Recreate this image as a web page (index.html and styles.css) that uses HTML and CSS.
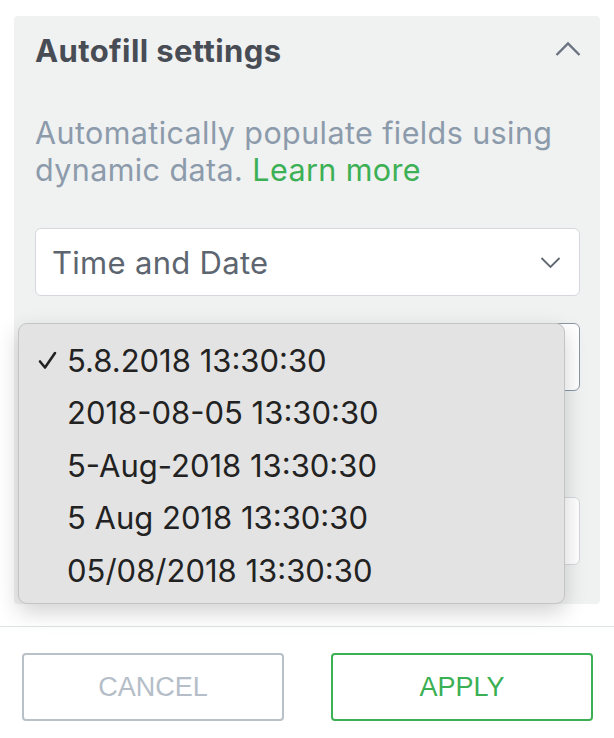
FILE: index.html
```html
<!DOCTYPE html>
<html>
<head>
<meta charset="utf-8">
<link rel="stylesheet" href="styles.css">
</head>
<body>
<div class="page">
  <div class="panel">
    <div class="panel-head">
      <h2 class="title">Autofill settings</h2>
      <svg class="chev-up" width="26" height="16" viewBox="0 0 26 16"><polyline points="1.5,14 13,2.5 24.5,14" fill="none" stroke="#6b7380" stroke-width="2.4"/></svg>
    </div>
    <p class="desc">Automatically populate fields using dynamic data. <a class="link">Learn more</a></p>
    <div class="select">
      <span class="select-text">Time and Date</span>
      <svg class="chev-down" width="21" height="13" viewBox="0 0 21 13"><polyline points="1.5,2 10.5,11 19.5,2" fill="none" stroke="#5f6770" stroke-width="1.8"/></svg>
    </div>
    <div class="select focused"></div>
    <div class="select third"></div>
    <div class="menu">
      <div class="item"><svg class="check" width="19" height="19" viewBox="0 0 19 19"><polyline points="2,10.5 7,16.5 17,2" fill="none" stroke="#222" stroke-width="2.6" stroke-linecap="round" stroke-linejoin="round"/></svg><span>5.8.2018 13:30:30</span></div>
      <div class="item"><span>2018-08-05 13:30:30</span></div>
      <div class="item"><span>5-Aug-2018 13:30:30</span></div>
      <div class="item"><span>5 Aug 2018 13:30:30</span></div>
      <div class="item"><span>05/08/2018 13:30:30</span></div>
    </div>
  </div>
  <div class="footer">
    <button class="btn cancel">CANCEL</button>
    <button class="btn apply">APPLY</button>
  </div>
</div>
</body>
</html>
```
FILE: styles.css
```css
html, body {
  margin: 0;
  padding: 0;
  background: #ffffff;
  font-family: Inter, "Noto Sans", sans-serif;
}
.page {
  width: 614px;
  height: 738px;
  padding-top: 16px;
  box-sizing: border-box;
  overflow: hidden;
}
.panel {
  position: relative;
  margin: 0 14px;
  height: 588px;
  background: #f0f1f1;
  border-radius: 4px;
  padding: 0 20px 0 21px;
  box-sizing: border-box;
}
.panel-head {
  height: 68px;
  display: flex;
  align-items: center;
  justify-content: space-between;
}
.title {
  margin: 0;
  font-size: 31px;
  font-weight: 700;
  color: #474c55;
  letter-spacing: 0.4px;
}
.chev-up {
  margin-right: -1px;
  margin-top: -2px;
}
.desc {
  margin: 30px 0 0;
  font-size: 30.5px;
  line-height: 37px;
  color: #8c9bab;
  letter-spacing: 0.4px;
}
.link {
  color: #3cb054;
}
.select {
  height: 68px;
  margin-top: 40px;
  background: #ffffff;
  border: 1px solid #d5d9dd;
  border-radius: 6px;
  box-sizing: border-box;
  display: flex;
  align-items: center;
  justify-content: space-between;
  padding: 0 18px 0 16px;
}
.select-text {
  font-size: 31px;
  color: #5d6670;
  letter-spacing: 0.3px;
}
.select.focused {
  margin-top: 27px;
  border-color: #8a98a6;
}
.select.third {
  margin-top: 106px;
}
.menu {
  position: absolute;
  left: 4px;
  top: 307px;
  width: 547px;
  height: 281px;
  background: #e3e3e3;
  border: 1px solid #c4c4c4;
  border-radius: 9px;
  box-sizing: border-box;
  padding-top: 10px;
  box-shadow: 0 8px 22px rgba(0, 0, 0, 0.18);
}
.item {
  height: 52.5px;
  display: flex;
  align-items: center;
  padding-left: 48px;
  position: relative;
  font-size: 31px;
  color: #222222;
}
.check {
  position: absolute;
  left: 19px;
  top: 17px;
}
.footer {
  margin-top: 22px;
  border-top: 1px solid #dde2e5;
  display: flex;
  gap: 47px;
  padding: 26px 21px 0 22px;
}
.btn {
  flex: 1;
  height: 68px;
  background: #ffffff;
  border-radius: 4px;
  font-family: "Liberation Sans", Arial, sans-serif;
  font-size: 27px;
}
.cancel {
  border: 2px solid #b8c0c8;
  color: #b5bec8;
}
.apply {
  border: 2px solid #3cb054;
  color: #3cb054;
}
```
